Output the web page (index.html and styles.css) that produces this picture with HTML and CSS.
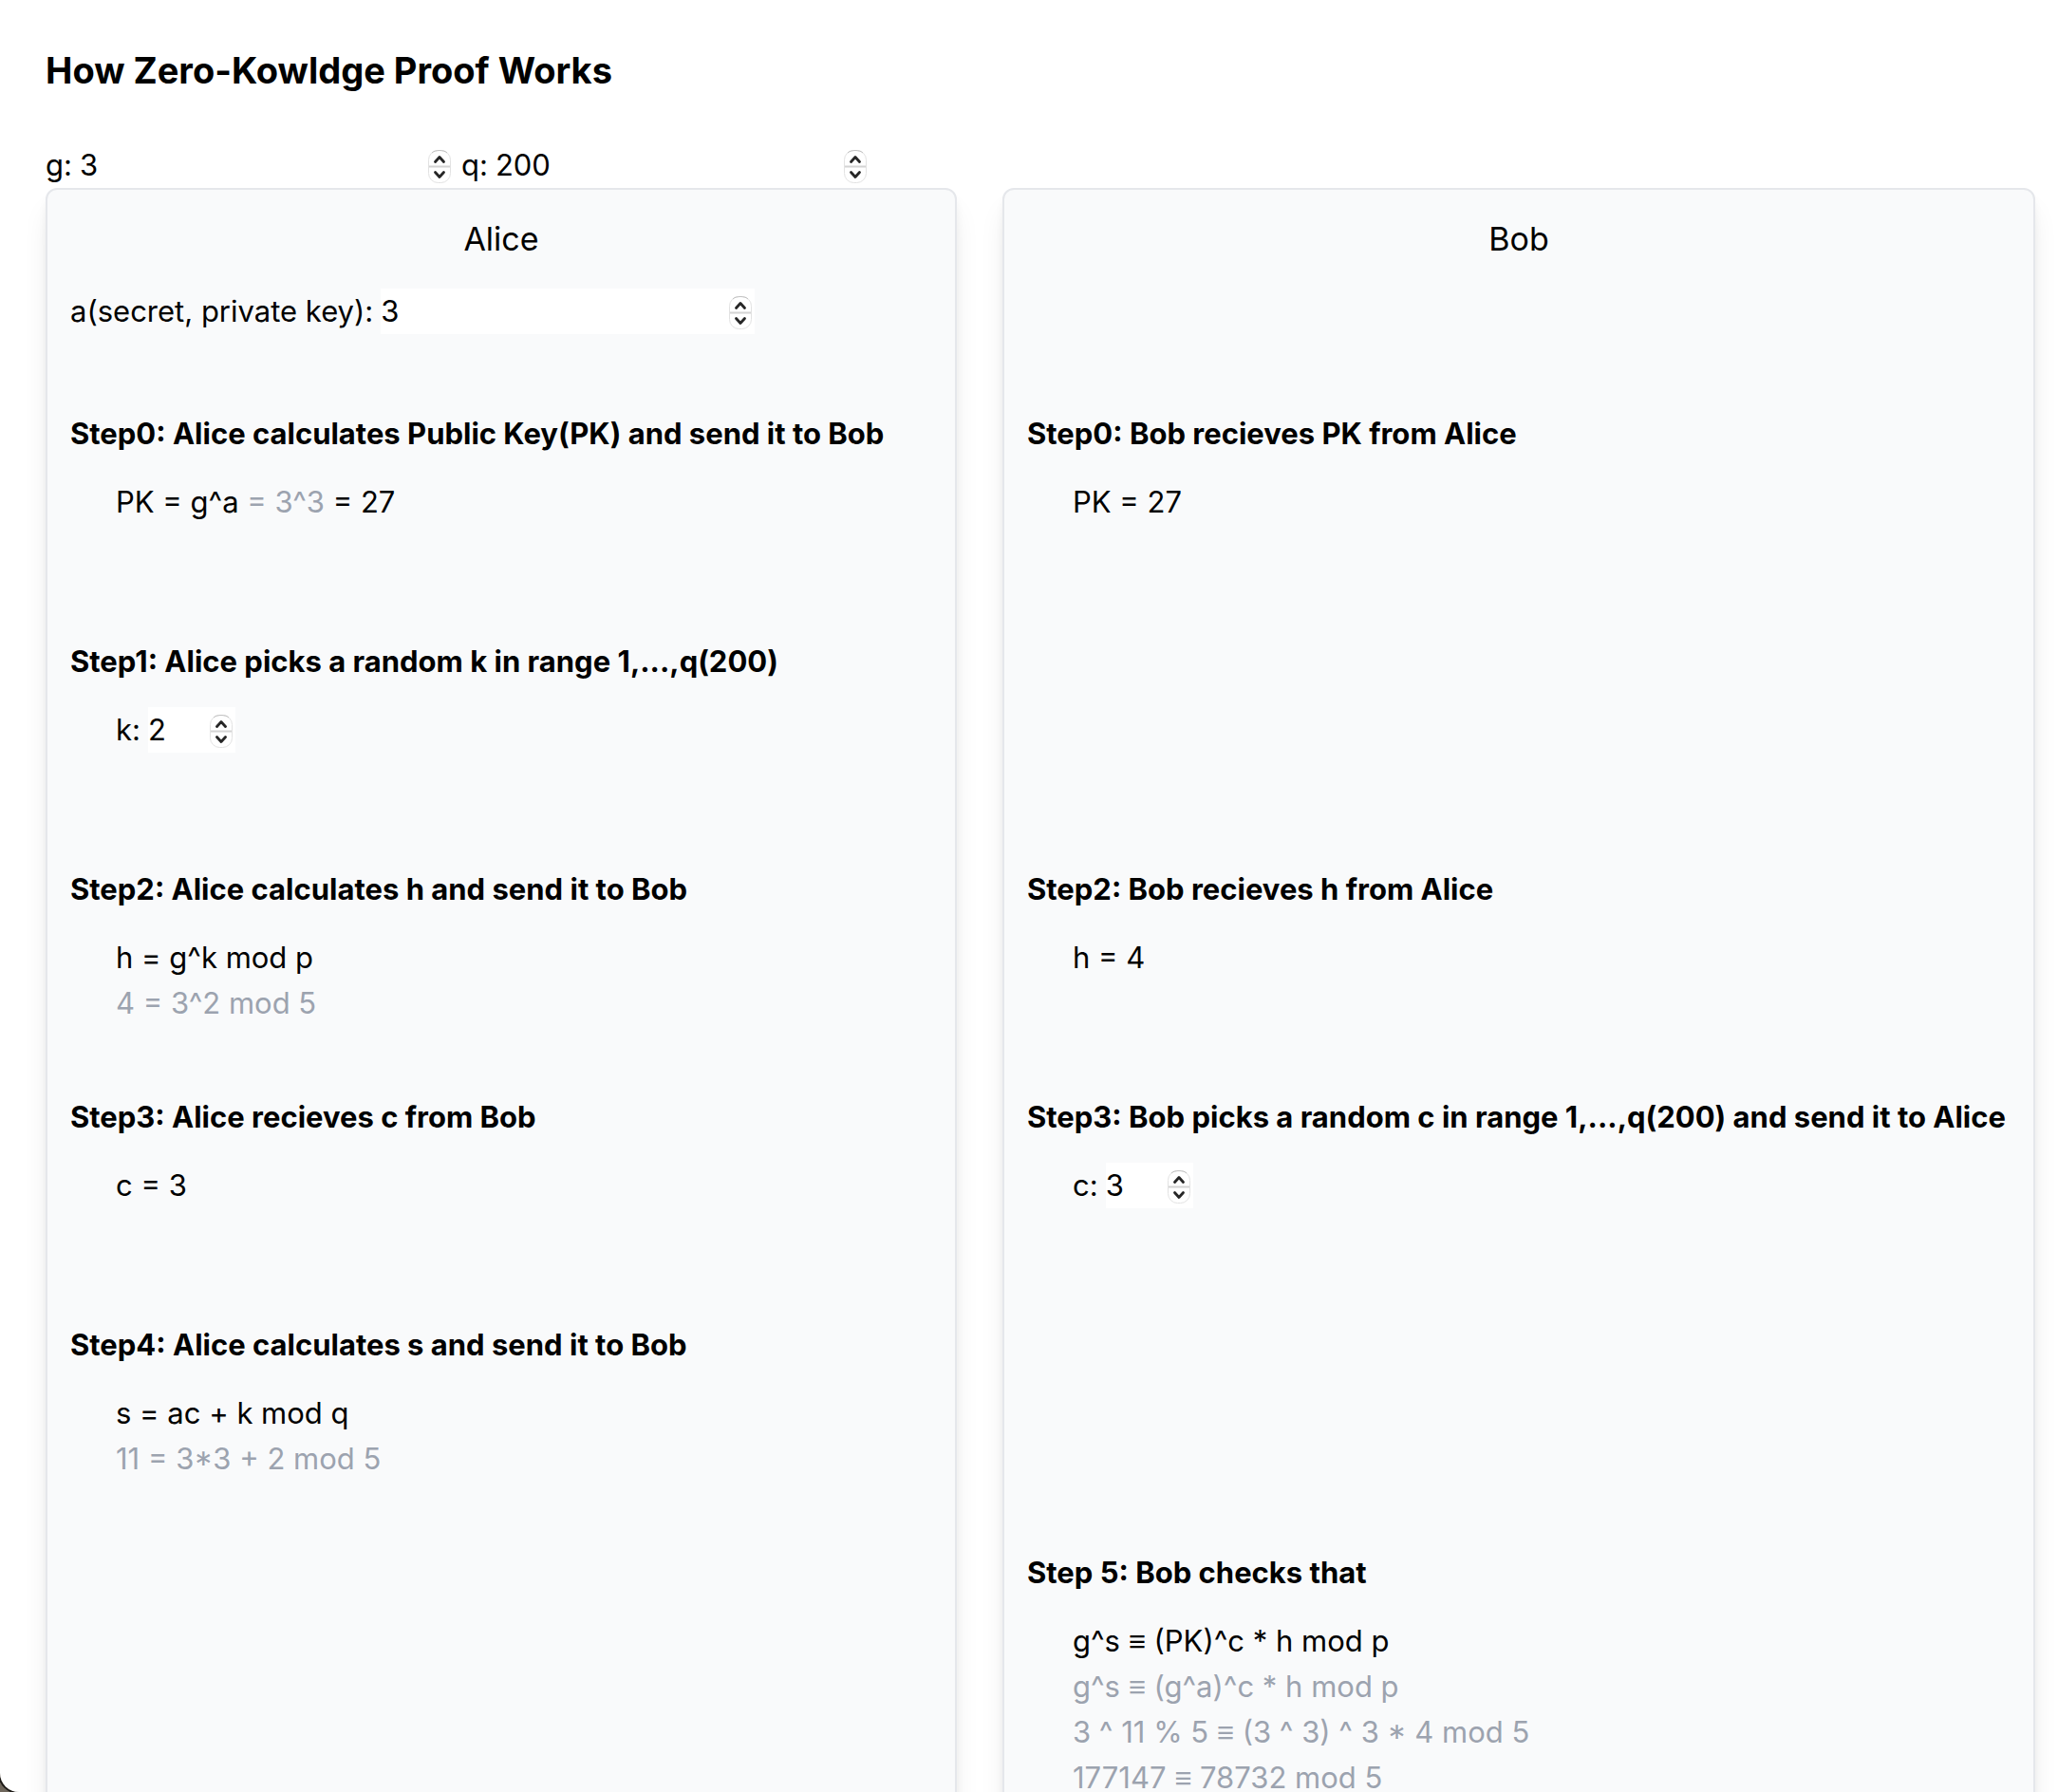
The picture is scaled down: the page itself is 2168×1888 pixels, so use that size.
FILE: index.html
```html
<!DOCTYPE html>
<html lang="en">
<head>
<meta charset="utf-8">
<title>How Zero-Kowldge Proof Works</title>
<link rel="stylesheet" href="styles.css">
</head>
<body>
<svg class="symbols" aria-hidden="true">
  <symbol id="stepper" viewBox="0 0 26 38">
    <rect x="1.500" y="2.500" width="23" height="34" rx="10" fill="#fff" stroke="#e2e2e2" stroke-width="1"/>
    <path d="M5 5C8 1.700 18 1.700 21 5" fill="none" stroke="#c2c2c2"/>
    <rect x="2" y="18.500" width="22" height="2" fill="#d4d4d4"/>
    <path d="M8.500 14.500L13 9.500L17.500 14.500M8.500 25.500L13 30.500L17.500 25.500" fill="none" stroke="#262626" stroke-width="2.800" stroke-linecap="round" stroke-linejoin="round"/>
  </symbol>
</svg>
<main class="page">
  <h1 class="title">How Zero-Kowldge Proof Works</h1>
  <div class="params">
    <label class="field">g: <span class="number"><input type="number" value="3"><svg class="stepper"><use href="#stepper"/></svg></span></label>
    <label class="field">q: <span class="number"><input type="number" value="200"><svg class="stepper"><use href="#stepper"/></svg></span></label>
  </div>
  <div class="players">
    <section class="card">
      <h2 class="name">Alice</h2>
      <div class="setup">
        <label class="field">a(secret, private key): <span class="number"><input type="number" value="3"><svg class="stepper"><use href="#stepper"/></svg></span></label>
      </div>
      <div class="step">
        <h3>Step0: Alice calculates Public Key(PK) and send it to Bob</h3>
        <div class="body"><p>PK = g^a <span class="muted">= 3^3</span> = 27</p></div>
      </div>
      <div class="step">
        <h3>Step1: Alice picks a random k in range 1,...,q(200)</h3>
        <div class="body"><label class="field">k: <span class="number short"><input type="number" value="2"><svg class="stepper"><use href="#stepper"/></svg></span></label></div>
      </div>
      <div class="step">
        <h3>Step2: Alice calculates h and send it to Bob</h3>
        <div class="body"><p>h = g^k mod p</p><p class="muted">4 = 3^2 mod 5</p></div>
      </div>
      <div class="step">
        <h3>Step3: Alice recieves c from Bob</h3>
        <div class="body"><p>c = 3</p></div>
      </div>
      <div class="step">
        <h3>Step4: Alice calculates s and send it to Bob</h3>
        <div class="body"><p>s = ac + k mod q</p><p class="muted">11 = 3*3 + 2 mod 5</p></div>
      </div>
    </section>
    <section class="card">
      <h2 class="name">Bob</h2>
      <div class="setup"></div>
      <div class="step">
        <h3>Step0: Bob recieves PK from Alice</h3>
        <div class="body"><p>PK = 27</p></div>
      </div>
      <div class="step"></div>
      <div class="step">
        <h3>Step2: Bob recieves h from Alice</h3>
        <div class="body"><p>h = 4</p></div>
      </div>
      <div class="step">
        <h3>Step3: Bob picks a random c in range 1,...,q(200) and send it to Alice</h3>
        <div class="body"><label class="field">c: <span class="number short"><input type="number" value="3"><svg class="stepper"><use href="#stepper"/></svg></span></label></div>
      </div>
      <div class="step"></div>
      <div class="step">
        <h3>Step 5: Bob checks that</h3>
        <div class="body">
          <p>g^s ≡ (PK)^c * h mod p</p>
          <p class="muted">g^s ≡ (g^a)^c * h mod p</p>
          <p class="muted">3 ^ 11 % 5 ≡ (3 ^ 3) ^ 3 * 4 mod 5</p>
          <p class="muted">177147 ≡ 78732 mod 5</p>
        </div>
      </div>
    </section>
  </div>
</main>
</body>
</html>
```
FILE: styles.css
```css
* {
  box-sizing: border-box;
  margin: 0;
}

html {
  background: #6f675c;
}

body {
  font: 31px/48px Inter, "Liberation Sans", sans-serif;
  color: #000;
}

.symbols {
  display: none;
}

.page {
  height: 100vh;
  padding: 46px 24px 48px 48px;
  overflow-y: auto;
  scrollbar-width: none;
  background: #fff;
  border-bottom-left-radius: 20px;
  box-shadow: 0 0 0 2px #1c1a17;
}

.title {
  margin-bottom: 48px;
  font-size: 38px;
  line-height: 56px;
  font-weight: 700;
}

.params {
  display: flex;
  gap: 8px;
}

.field {
  display: inline-flex;
  align-items: center;
  gap: 8px;
}

.number {
  position: relative;
  display: inline-flex;
  width: 394px;
}

.short {
  width: 92px;
}

.number input {
  width: 100%;
  height: 48px;
  padding: 0;
  border: 0;
  background: #fff;
  color: inherit;
  font: inherit;
  appearance: textfield;
}

.number input::-webkit-inner-spin-button {
  appearance: none;
}

.stepper {
  position: absolute;
  top: 6px;
  right: 2px;
  width: 26px;
  height: 38px;
  pointer-events: none;
}

.players {
  display: grid;
  grid-template-columns: 15fr 17fr;
  gap: 48px;
}

.card {
  padding: 24px;
  background: #f9fafb;
  border: 2px solid #e5e7eb;
  border-radius: 12px;
  box-shadow: 0 20px 30px -6px rgba(0, 0, 0, 0.1), 0 8px 12px -4px rgba(0, 0, 0, 0.1);
}

.name {
  margin-bottom: 24px;
  font-size: 34px;
  line-height: 56px;
  font-weight: 400;
  text-align: center;
}

.setup {
  display: flex;
  height: 129px;
  align-items: flex-start;
}

.step {
  min-height: 240px;
}

.step h3 {
  margin-bottom: 24px;
  font-size: 31px;
  line-height: 48px;
  font-weight: 700;
}

.body {
  padding-left: 48px;
}

.muted {
  color: #9ca3af;
}
```
